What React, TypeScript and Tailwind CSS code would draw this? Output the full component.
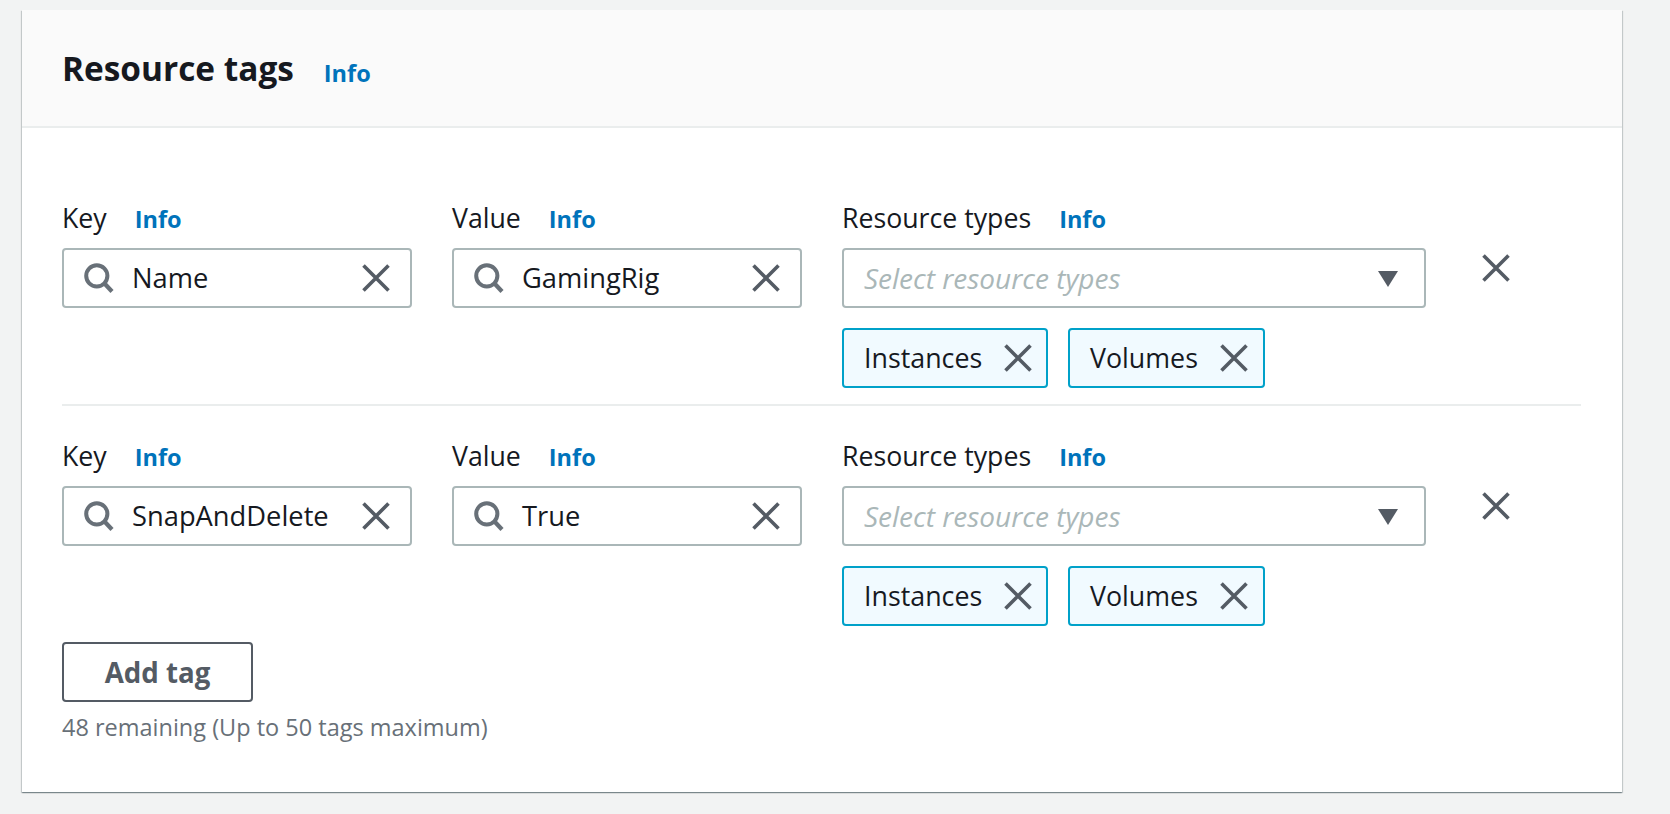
const FONT = "font-['Open_Sans','Noto_Sans',sans-serif]";

function Info({ className = "" }: { className?: string }) {
  return <span className={`text-[23.5px] leading-[30px] font-bold text-[#0073bb] ${className}`}>Info</span>;
}

function XIcon({ size = 30, color = "#545b64" }: { size?: number; color?: string }) {
  return (
    <svg width={size} height={size} viewBox="0 0 30 30" fill="none" className="shrink-0">
      <path d="M2.5 2.5L27.5 27.5M27.5 2.5L2.5 27.5" stroke={color} strokeWidth="3.6" />
    </svg>
  );
}

function SearchIcon() {
  return (
    <svg width="30" height="30" viewBox="0 0 30 30" fill="none" className="shrink-0">
      <circle cx="12.8" cy="12.8" r="10.6" stroke="#687078" strokeWidth="4" />
      <path d="M20.5 20.5L28 28.5" stroke="#687078" strokeWidth="4.2" />
    </svg>
  );
}

function Label({ text }: { text: string }) {
  return (
    <div className="flex items-center h-[30px] mb-[15px] text-[26.7px] text-[#16191f]">
      <span>{text}</span>
      <Info className="ml-[28px] mt-[1px]" />
    </div>
  );
}

function SearchField({ label, value }: { label: string; value: string }) {
  return (
    <div className="w-[350px] shrink-0">
      <Label text={label} />
      <div className="flex items-center h-[60px] rounded-[4px] border-2 border-[#aab7b8] bg-white pl-[20px] pr-[19px]">
        <SearchIcon />
        <span className="ml-[18px] flex-1 text-[27.3px] text-[#16191f]">{value}</span>
        <XIcon />
      </div>
    </div>
  );
}

function Token({ text, width, right }: { text: string; width: string; right: string }) {
  return (
    <div className={`flex items-center justify-between h-[60px] ${width} ${right} rounded-[4px] border-2 border-[#00a1c9] bg-[#f1faff] pl-[20px] text-[26.8px] text-[#16191f]`}>
      <span>{text}</span>
      <XIcon />
    </div>
  );
}

function Row({ k, v }: { k: string; v: string }) {
  return (
    <div className="flex items-start">
      <SearchField label="Key" value={k} />
      <div className="w-[40px] shrink-0" />
      <SearchField label="Value" value={v} />
      <div className="w-[40px] shrink-0" />
      <div className="w-[584px] shrink-0">
        <Label text="Resource types" />
        <div className="flex items-center justify-between h-[60px] rounded-[4px] border-2 border-[#aab7b8] bg-white pl-[20px] pr-[25px]">
          <span className="text-[28px] leading-[38px] italic text-[#aab7b8] mb-[1px]">Select resource types</span>
          <svg width="22" height="18" viewBox="0 0 22 18" className="mt-[2px]"><path d="M1 1H21L11 17Z" fill="#545b64" /></svg>
        </div>
        <div className="flex gap-[20px] mt-[20px]">
          <Token text="Instances" width="w-[206px]" right="pr-[13px]" />
          <Token text="Volumes" width="w-[197px]" right="pr-[14px]" />
        </div>
      </div>
      <div className="ml-[55px] mt-[50px]">
        <XIcon />
      </div>
    </div>
  );
}

export default function App() {
  return (
    <div className={`h-[814px] overflow-hidden bg-[#f2f3f3] pt-[10px] pl-[22px] ${FONT}`}>
      <div className="w-[1600px] h-[782px] bg-white shadow-[0_1px_1px_0_rgba(0,28,36,0.3),1px_1px_1px_0_rgba(0,28,36,0.15),-1px_1px_1px_0_rgba(0,28,36,0.15)]">
        <div className="flex items-center h-[118px] bg-[#fafafa] border-b-2 border-[#eaeded] pl-[40px]">
          <h1 className="text-[33.4px] font-bold text-[#16191f] mt-[1px]">Resource tags</h1>
          <Info className="ml-[30px] mt-[10px]" />
        </div>
        <div className="pt-[75px] pl-[40px] pr-[41px]">
          <Row k="Name" v="GamingRig" />
          <div className="h-[2px] bg-[#eaeded] mt-[16px] mb-[35px]" />
          <Row k="SnapAndDelete" v="True" />
          <button className="block mt-[16px] w-[191px] h-[60px] pt-[1px] rounded-[4px] border-2 border-[#545b64] bg-white text-[27.7px] font-bold text-[#545b64]">Add tag</button>
          <p className="mt-[9px] text-[23.5px] leading-[32px] text-[#687078]">48 remaining (Up to 50 tags maximum)</p>
        </div>
      </div>
    </div>
  );
}
